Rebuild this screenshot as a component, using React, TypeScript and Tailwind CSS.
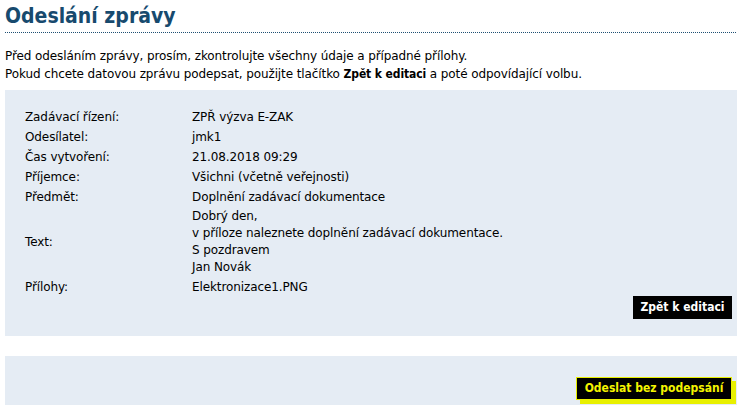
const rows: [string, string][] = [
  ['Zadávací řízení:', 'ZPŘ výzva E-ZAK'],
  ['Odesílatel:', 'jmk1'],
  ['Čas vytvoření:', '21.08.2018 09:29'],
  ['Příjemce:', 'Všichni (včetně veřejnosti)'],
  ['Předmět:', 'Doplnění zadávací dokumentace'],
];

const condensed = "font-['DejaVu_Sans_Condensed','DejaVu_Sans',sans-serif]";

export default function App() {
  return (
    <div className="w-[741px] h-[405px] overflow-hidden bg-white text-black text-[12px] tracking-[-0.1px] font-['DejaVu_Sans',sans-serif]">
      <h1 className="mx-[5px] pt-[4px] pb-[4px] border-b border-dotted border-[#1d4f73] text-[21px] leading-[24px] tracking-normal font-bold text-[#174a6e] font-['DejaVu_Sans_Condensed','DejaVu_Sans',sans-serif]">
        Odeslání zprávy
      </h1>
      <div className="mx-[5px] mt-[14px] leading-[18px]">
        <p>Před odesláním zprávy, prosím, zkontrolujte všechny údaje a případné přílohy.</p>
        <p>
          Pokud chcete datovou zprávu podepsat, použijte tlačítko <b className={condensed}>Zpět k editaci</b> a poté odpovídající volbu.
        </p>
      </div>

      <div className="mx-[5px] mt-[7px] w-[732px] bg-[#e5ecf4] pt-[17px] pb-[17px] pl-[20px] pr-[5px]">
        <table className="border-collapse">
          <tbody>
            {rows.map(([k, v]) => (
              <tr key={k} className="h-[20px]">
                <td className="w-[167px] align-middle">{k}</td>
                <td className="align-middle">{v}</td>
              </tr>
            ))}
            <tr>
              <td className="align-middle">Text:</td>
              <td className="leading-[17px] py-[1px]">
                Dobrý den,
                <br />v příloze naleznete doplnění zadávací dokumentace.
                <br />S pozdravem
                <br />Jan Novák
              </td>
            </tr>
            <tr className="h-[20px]">
              <td className="align-middle">Přílohy:</td>
              <td className="align-middle">Elektronizace1.PNG</td>
            </tr>
          </tbody>
        </table>
        <div className="flex justify-end -mt-[1px]">
          <button className={`bg-black text-white font-bold w-[99px] h-[23px] leading-[23px] text-[12px] tracking-normal ${condensed}`}>
            Zpět k editaci
          </button>
        </div>
      </div>

      <div className="mx-[5px] mt-[20px] w-[732px] h-[60px] bg-[#e5ecf4] flex justify-end items-start pt-[21px] pr-[5px]">
        <button
          className={`bg-black text-[#f4f400] font-bold w-[156px] h-[23px] leading-[21px] text-[12px] tracking-normal border border-[#e8f000] shadow-[4px_4px_0_#e8f000] ${condensed}`}
        >
          Odeslat bez podepsání
        </button>
      </div>
    </div>
  );
}
